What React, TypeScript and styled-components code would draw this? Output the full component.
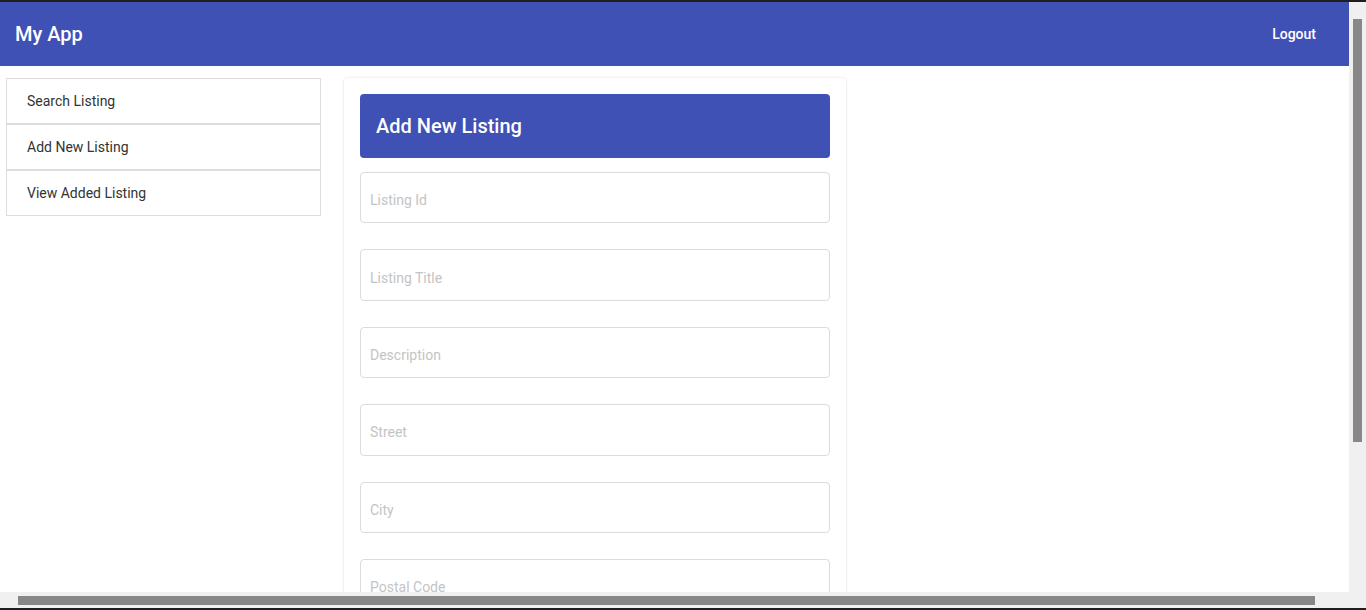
import styled, { createGlobalStyle } from "styled-components";

const fields = [
  "Listing Id",
  "Listing Title",
  "Description",
  "Street",
  "City",
  "Postal Code",
  "Country",
  "Price",
];

const menu = ["Search Listing", "Add New Listing", "View Added Listing"];

export default function App() {
  return (
    <>
      <GlobalStyle />
      <Frame>
        <Viewport>
          <Page>
            <NavBar>
              <Brand>My App</Brand>
              <LogoutButton>Logout</LogoutButton>
            </NavBar>
            <Main>
              <SideMenu>
                {menu.map((item) => (
                  <MenuItem key={item}>{item}</MenuItem>
                ))}
              </SideMenu>
              <FormCard>
                <FormHeader>Add New Listing</FormHeader>
                <FieldList>
                  {fields.map((field) => (
                    <Field key={field} placeholder={field} />
                  ))}
                </FieldList>
              </FormCard>
            </Main>
          </Page>
        </Viewport>
        <VTrack>
          <VThumb />
        </VTrack>
        <HTrack>
          <HThumb />
        </HTrack>
      </Frame>
    </>
  );
}

const GlobalStyle = createGlobalStyle`
  html, body {
    margin: 0;
    padding: 0;
    overflow: hidden;
    font-family: Roboto, "Liberation Sans", sans-serif;
  }
  * {
    box-sizing: border-box;
  }
`;

const Frame = styled.div`
  height: 100vh;
  display: grid;
  grid-template-columns: 1fr 17px;
  grid-template-rows: 1fr 16px;
  border-top: 2px solid #1e1e1e;
  border-bottom: 2px solid #1e1e1e;
  background: #f0f0f0;
`;

const Viewport = styled.div`
  grid-column: 1;
  grid-row: 1;
  overflow: hidden;
  background: #fff;
`;

const VTrack = styled.div`
  grid-column: 2;
  grid-row: 1 / 3;
  padding: 17px 4px 0;
  background: #f0f0f0;
`;

const VThumb = styled.div`
  width: 9px;
  height: 423px;
  background: #878787;
`;

const HTrack = styled.div`
  grid-column: 1;
  grid-row: 2;
  padding: 4px 0 0 18px;
  background: #f0f0f0;
`;

const HThumb = styled.div`
  width: 1297px;
  height: 9px;
  background: #878787;
`;

const Page = styled.div`
  width: 1366px;
`;

const NavBar = styled.header`
  height: 64px;
  display: flex;
  align-items: center;
  justify-content: space-between;
  padding: 0 50px 0 15px;
  background: #3f51b5;
  color: #fff;
`;

const Brand = styled.div`
  font-size: 20px;
  font-weight: 500;
`;

const LogoutButton = styled.button`
  border: none;
  background: transparent;
  color: #fff;
  font-family: inherit;
  font-size: 14px;
  font-weight: 500;
  padding: 0;
  cursor: pointer;
`;

const Main = styled.main`
  display: flex;
  align-items: flex-start;
  gap: 23px;
  padding: 12px 6px 0;
`;

const SideMenu = styled.nav`
  width: 315px;
  display: flex;
  flex-direction: column;
`;

const MenuItem = styled.div`
  height: 46px;
  display: flex;
  align-items: center;
  padding: 0 20px;
  border: 1px solid #dddddd;
  font-size: 14px;
  color: #333;
`;

const FormCard = styled.section`
  width: 502px;
  padding: 16px;
  border-radius: 4px;
  background: #fff;
  box-shadow: 0 0 3px rgba(0, 0, 0, 0.12), 0 1px 2px rgba(0, 0, 0, 0.06);
`;

const FormHeader = styled.h2`
  margin: 0 0 14px;
  height: 64px;
  display: flex;
  align-items: center;
  padding: 0 16px;
  border-radius: 4px;
  background: #3f51b5;
  color: #fff;
  font-size: 20px;
  font-weight: 500;
`;

const FieldList = styled.div`
  display: flex;
  flex-direction: column;
  gap: 26px;
`;

const Field = styled.input`
  height: 51.4px;
  width: 100%;
  padding: 5px 9px 0;
  border: 1px solid #dcdcdc;
  border-radius: 4px;
  font-family: inherit;
  font-size: 14px;
  color: #333;
  outline: none;

  &::placeholder {
    color: #c4c4c4;
  }
`;
